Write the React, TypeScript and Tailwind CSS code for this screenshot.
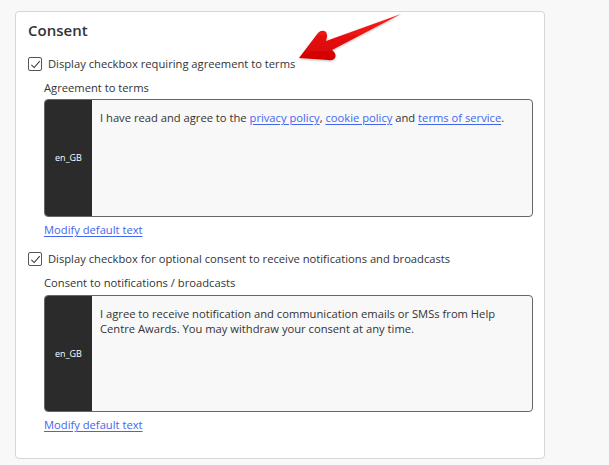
import React from "react";

const font = { fontFamily: '"Open Sans", "Noto Sans", sans-serif' };

function Check() {
  return (
    <span className="flex h-[14px] w-[14px] shrink-0 items-center justify-center rounded-[2px] border border-[#555] bg-white">
      <svg width="11" height="11" viewBox="0 0 12 12" fill="none">
        <path d="M1.5 6.3 L4.6 9.3 L10.6 2.4" stroke="#333" strokeWidth="1.1" />
      </svg>
    </span>
  );
}

function Link({ children }: { children: React.ReactNode }) {
  return <a className="cursor-pointer text-[#4466ee] underline underline-offset-2">{children}</a>;
}

function LocaleBox({ h, children }: { h: string; children: React.ReactNode }) {
  return (
    <div className={`flex ${h} rounded-[4px] border border-[#666] bg-[#f8f8f8]`}>
      <div className="flex w-[47px] shrink-0 items-center justify-center rounded-l-[3px] bg-[#2b2b2b] text-[9px] text-white">
        en_GB
      </div>
      <div className="pl-[8px] pr-[9px] pt-[10px] text-[11.2px] leading-[15px] text-[#333]">{children}</div>
    </div>
  );
}

export default function App() {
  return (
    <div className="relative min-h-[465px] bg-[#f8f8f8] pl-[15px] pt-[11px]" style={font}>
      <div className="w-[530px] rounded-[4px] border border-[#d6d6d6] bg-white pb-[25px] pl-[12px] pr-[11px] pt-[8px] text-[#333]">
        <h2 className="text-[15px] font-semibold leading-[20px] text-[#333]">Consent</h2>

        <div className="mt-[17px] flex items-center gap-[6px] text-[11.2px] leading-[14px]">
          <Check />
          <span>Display checkbox requiring agreement to terms</span>
        </div>
        <div className="pl-[16px]">
          <div className="mt-[9px] text-[11.2px] leading-[16px]">Agreement to terms</div>
          <div className="mt-[3px]">
            <LocaleBox h="h-[118px]">
              I have read and agree to the <Link>privacy policy</Link>, <Link>cookie policy</Link> and{" "}
              <Link>terms of service</Link>.
            </LocaleBox>
          </div>
          <div className="mt-[5px] text-[11.2px] leading-[16px]">
            <Link>Modify default text</Link>
          </div>
        </div>

        <div className="mt-[14px] flex items-center gap-[6px] text-[11.2px] leading-[14px]">
          <Check />
          <span>Display checkbox for optional consent to receive notifications and broadcasts</span>
        </div>
        <div className="pl-[16px]">
          <div className="mt-[9px] text-[11.2px] leading-[16px]">Consent to notifications / broadcasts</div>
          <div className="mt-[4px]">
            <LocaleBox h="h-[117px]">
              I agree to receive notification and communication emails or SMSs from Help
              <br />
              Centre Awards. You may withdraw your consent at any time.
            </LocaleBox>
          </div>
          <div className="mt-[5px] text-[11.2px] leading-[16px]">
            <Link>Modify default text</Link>
          </div>
        </div>
      </div>

      {/* annotation arrow */}
      <svg className="absolute left-[290px] top-[6px]" width="120" height="62" viewBox="290 6 120 62">
        <defs>
          <linearGradient id="red" x1="0" y1="0" x2="0" y2="1">
            <stop offset="0" stopColor="#ff2020" />
            <stop offset="1" stopColor="#d00000" />
          </linearGradient>
          <filter id="sh" x="-20%" y="-20%" width="140%" height="160%">
            <feDropShadow dx="0" dy="1" stdDeviation="1" floodColor="#000" floodOpacity="0.25" />
          </filter>
        </defs>
        <path
          d="M299 58 L318 33 Q322 29 326 32 Q328 35 326 41 L401 14 L332 50 Q337 54 335 58 Q333 61 328 60 Z"
          fill="url(#red)"
          filter="url(#sh)"
        />
      </svg>
    </div>
  );
}
